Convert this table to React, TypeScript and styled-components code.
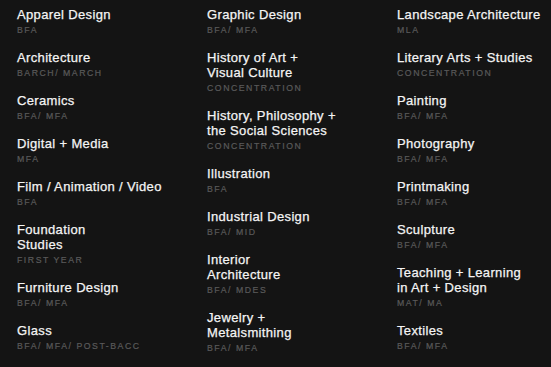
import React from "react";
import styled, { createGlobalStyle } from "styled-components";

const Global = createGlobalStyle`
  html, body { margin: 0; padding: 0; background: #141414; }
  body { width: 551px; height: 367px; overflow: hidden; }
`;

const Page = styled.div`
  display: grid;
  grid-template-columns: 190px 190px 171px;
  padding: 7px 0 0 17px;
  background: #141414;
  min-height: 367px;
  box-sizing: border-box;
  font-family: "Liberation Sans", Arial, sans-serif;
`;

const Column = styled.ul`
  list-style: none;
  margin: 0;
  padding: 0;
  display: flex;
  flex-direction: column;
`;

const Item = styled.li`
  display: flex;
  flex-direction: column;
  margin-bottom: 13px;
`;

const Title = styled.span`
  color: #f4f4f4;
  font-size: 13px;
  line-height: 15px;
  letter-spacing: 0.35px;
  white-space: pre-line;
  -webkit-text-stroke: 0.25px #f4f4f4;
`;

const Degree = styled.span`
  margin-top: 2px;
  color: #5a5a5a;
  font-size: 8.7px;
  line-height: 13px;
  letter-spacing: 1.55px;
  text-transform: uppercase;
  -webkit-text-stroke: 0.2px #5a5a5a;
`;

type Program = { name: string; degree: string };

const columns: Program[][] = [
  [
    { name: "Apparel Design", degree: "BFA" },
    { name: "Architecture", degree: "BARCH/ MARCH" },
    { name: "Ceramics", degree: "BFA/ MFA" },
    { name: "Digital + Media", degree: "MFA" },
    { name: "Film / Animation / Video", degree: "BFA" },
    { name: "Foundation\nStudies", degree: "First Year" },
    { name: "Furniture Design", degree: "BFA/ MFA" },
    { name: "Glass", degree: "BFA/ MFA/ Post-Bacc" },
  ],
  [
    { name: "Graphic Design", degree: "BFA/ MFA" },
    { name: "History of Art +\nVisual Culture", degree: "Concentration" },
    { name: "History, Philosophy +\nthe Social Sciences", degree: "Concentration" },
    { name: "Illustration", degree: "BFA" },
    { name: "Industrial Design", degree: "BFA/ MID" },
    { name: "Interior\nArchitecture", degree: "BFA/ MDES" },
    { name: "Jewelry +\nMetalsmithing", degree: "BFA/ MFA" },
  ],
  [
    { name: "Landscape Architecture", degree: "MLA" },
    { name: "Literary Arts + Studies", degree: "Concentration" },
    { name: "Painting", degree: "BFA/ MFA" },
    { name: "Photography", degree: "BFA/ MFA" },
    { name: "Printmaking", degree: "BFA/ MFA" },
    { name: "Sculpture", degree: "BFA/ MFA" },
    { name: "Teaching + Learning\nin Art + Design", degree: "MAT/ MA" },
    { name: "Textiles", degree: "BFA/ MFA" },
  ],
];

export default function App() {
  return (
    <>
      <Global />
      <Page>
        {columns.map((col, i) => (
          <Column key={i}>
            {col.map((p) => (
              <Item key={p.name}>
                <Title>{p.name}</Title>
                <Degree>{p.degree}</Degree>
              </Item>
            ))}
          </Column>
        ))}
      </Page>
    </>
  );
}
